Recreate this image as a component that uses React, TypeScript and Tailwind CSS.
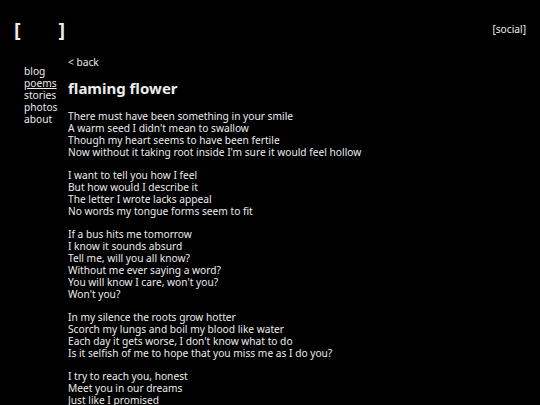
import React from "react";

const stanzas = [
  [
    "There must have been something in your smile",
    "A warm seed I didn't mean to swallow",
    "Though my heart seems to have been fertile",
    "Now without it taking root inside I'm sure it would feel hollow",
  ],
  [
    "I want to tell you how I feel",
    "But how would I describe it",
    "The letter I wrote lacks appeal",
    "No words my tongue forms seem to fit",
  ],
  [
    "If a bus hits me tomorrow",
    "I know it sounds absurd",
    "Tell me, will you all know?",
    "Without me ever saying a word?",
    "You will know I care, won't you?",
    "Won't you?",
  ],
  [
    "In my silence the roots grow hotter",
    "Scorch my lungs and boil my blood like water",
    "Each day it gets worse, I don't know what to do",
    "Is it selfish of me to hope that you miss me as I do you?",
  ],
  [
    "I try to reach you, honest",
    "Meet you in our dreams",
    "Just like I promised",
  ],
];

export default function App() {
  return (
    <div
      className="w-[540px] h-[405px] overflow-hidden bg-black text-[#ececec] text-[10.2px] leading-[12px]"
      style={{ fontFamily: '"Noto Sans", sans-serif' }}
    >
      <header className="flex items-start justify-between pl-[14px] pr-[14px] pt-[18px]">
        <div className="flex justify-between w-[51px] text-[20px] leading-[24px] font-bold">
          <span>[</span>
          <span>]</span>
        </div>
        <div className="pt-[5px]">[social]</div>
      </header>
      <div className="flex pl-[24px] pt-[14px]">
        <nav className="flex flex-col w-[44px] pt-[9px]">
          <span>blog</span>
          <span className="underline">poems</span>
          <span>stories</span>
          <span>photos</span>
          <span>about</span>
        </nav>
        <main className="flex flex-col">
          <div>&lt; back</div>
          <h1 className="text-[15px] leading-[20px] font-bold mt-[10px] mb-[12px]">flaming flower</h1>
          {stanzas.map((s, i) => (
            <p key={i} className="mb-[11px]">
              {s.map((l, j) => (
                <span key={j} className="block">{l}</span>
              ))}
            </p>
          ))}
        </main>
      </div>
    </div>
  );
}
